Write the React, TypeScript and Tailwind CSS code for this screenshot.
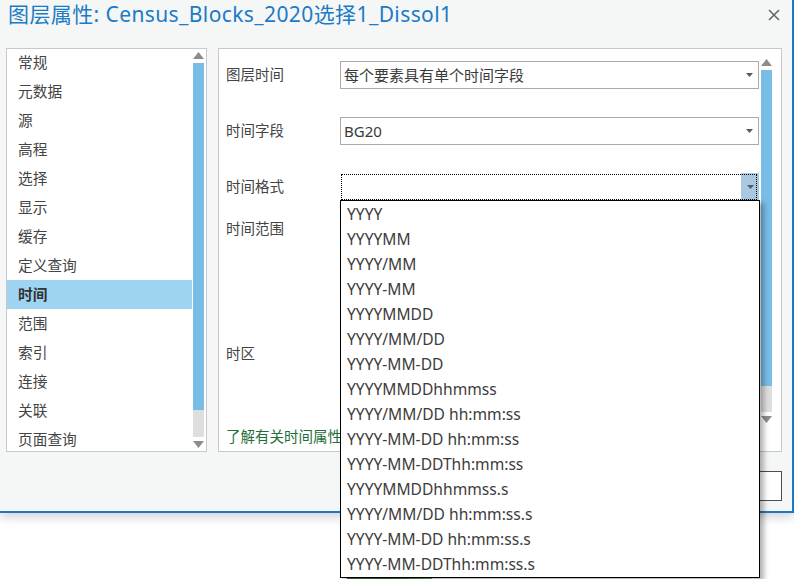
import React from 'react'

const navItems = ['常规', '元数据', '源', '高程', '选择', '显示', '缓存', '定义查询', '时间', '范围', '索引', '连接', '关联', '页面查询']

const formats = [
  'YYYY',
  'YYYYMM',
  'YYYY/MM',
  'YYYY-MM',
  'YYYYMMDD',
  'YYYY/MM/DD',
  'YYYY-MM-DD',
  'YYYYMMDDhhmmss',
  'YYYY/MM/DD hh:mm:ss',
  'YYYY-MM-DD hh:mm:ss',
  'YYYY-MM-DDThh:mm:ss',
  'YYYYMMDDhhmmss.s',
  'YYYY/MM/DD hh:mm:ss.s',
  'YYYY-MM-DD hh:mm:ss.s',
  'YYYY-MM-DDThh:mm:ss.s',
]

const font = { fontFamily: '"Noto Sans", "Noto Sans CJK SC", sans-serif' }

const Caret = () => (
  <svg width="7" height="4" viewBox="0 0 7 4" className="shrink-0">
    <path d="M0 0 L7 0 L3.5 4 Z" fill="#5a5a5a" />
  </svg>
)

const ArrowUp = () => (
  <svg width="11" height="7" viewBox="0 0 11 7">
    <path d="M5.5 0 L11 7 L0 7 Z" fill="#8c8c8c" />
  </svg>
)

const ArrowDown = () => (
  <svg width="11" height="7" viewBox="0 0 11 7">
    <path d="M0 0 L11 0 L5.5 7 Z" fill="#8c8c8c" />
  </svg>
)

const Combo: React.FC<{ value?: string; focused?: boolean }> = ({ value, focused }) => (
  <div className={`relative flex h-[28px] w-[419px] bg-white ${focused ? '' : 'border border-[#ababab]'}`}>
    <div className="flex flex-1 items-center pl-[3px] text-[15px] text-[#3a3a3a]">{value}</div>
    {focused ? (
      <div className="flex w-[18px] items-center justify-center bg-[#a9c8e2] pl-[1px]">
        <Caret />
      </div>
    ) : (
      <div className="flex w-[18px] items-center justify-center">
        <Caret />
      </div>
    )}
    {focused && <div className="pointer-events-none absolute inset-y-[1px] left-[1px] right-[2px] border border-dotted border-black" />}
  </div>
)

const FieldRow: React.FC<{ label: string; children?: React.ReactNode; className?: string }> = ({ label, children, className }) => (
  <div className={`flex items-center ${className ?? ''}`}>
    <div className="w-[114px] text-[14.5px] text-[#444]">{label}</div>
    {children}
  </div>
)

export default function App() {
  return (
    <div className="relative h-[579px] w-[794px] overflow-hidden bg-white" style={font}>
      {/* window behind */}
      <div className="absolute left-[347px] top-[577px] h-[2px] w-[85px] bg-gradient-to-r from-[#4b7a2a] via-[#3f6e23] to-[#7fae4a]" />

      {/* dialog */}
      <div className="relative flex h-[513px] flex-col border-b-2 border-r-2 border-[#1a79c6] bg-[#f5f6f6] pl-[6px] pr-[10px] shadow-[0_4px_10px_rgba(0,0,0,0.18)]">
        <div className="flex h-[48px] items-start justify-between">
          <div className="pl-[2px] text-[21px] leading-[28px] tracking-[0.4px] text-[#1b7bc6]">图层属性: Census_Blocks_2020选择1_Dissol1</div>
          <svg width="12" height="12" viewBox="0 0 12 12" className="mr-[2px] mt-[9px]">
            <path d="M1 1 L11 11 M11 1 L1 11" stroke="#666" strokeWidth="1.6" />
          </svg>
        </div>

        <div className="flex h-[404px] gap-[11px]">
          {/* nav list */}
          <div className="flex w-[201px] border border-[#c9c9c9] bg-white">
            <div className="-mt-[1px] flex flex-1 flex-col">
              {navItems.map((item) => (
                <div
                  key={item}
                  className={`flex h-[29px] shrink-0 items-center pl-[11px] text-[14.7px] ${
                    item === '时间' ? 'bg-[#9fd3f2] font-bold text-[#333]' : 'text-[#444]'
                  }`}
                >
                  {item}
                </div>
              ))}
            </div>
            <div className="ml-[1px] mr-[2px] flex w-[11px] flex-col items-center pt-[3px]">
              <ArrowUp />
              <div className="mt-[4px] h-[347px] w-full bg-[#79bde7]" />
              <div className="h-[27px] w-full bg-[#dedede]" />
              <div className="mt-[4px]">
                <ArrowDown />
              </div>
            </div>
          </div>

          {/* settings */}
          <div className="flex w-[564px] border border-[#c9c9c9] bg-white">
            <div className="flex flex-1 flex-col pl-[7px] pt-[12px]">
              <FieldRow label="图层时间">
                <Combo value="每个要素具有单个时间字段" />
              </FieldRow>
              <FieldRow label="时间字段" className="mt-[28px]">
                <Combo value="BG20" />
              </FieldRow>
              <FieldRow label="时间格式" className="mt-[28px]">
                <Combo focused />
              </FieldRow>
              <FieldRow label="时间范围" className="mt-[18px] h-[20px]" />
              <FieldRow label="时区" className="mt-[105px] h-[20px]" />
              <div className="mt-[62px] h-[20px] w-[114px] overflow-hidden whitespace-nowrap text-[14.5px] leading-[20px] text-[#1f6e3a]">了解有关时间属性的详细信息</div>
            </div>
            <div className="ml-[2px] mr-[9px] flex w-[11px] flex-col items-center pt-[10px]">
              <ArrowUp />
              <div className="mt-[4px] h-[316px] w-full bg-[#79bde7]" />
              <div className="h-[26px] w-full bg-[#dedede]" />
              <div className="mt-[4px]">
                <ArrowDown />
              </div>
            </div>
          </div>
        </div>

        <div className="mt-[19px] flex justify-end gap-[8px]">
          <div className="flex h-[30px] w-[76px] items-center justify-center border border-[#adadad] bg-white text-[14px] text-[#333]">确定</div>
          <div className="flex h-[30px] w-[76px] items-center justify-center border border-[#4f4f4f] bg-white text-[14px] text-[#333]">取消</div>
        </div>
      </div>

      {/* open drop-down list */}
      <div className="absolute left-[340px] top-[200px] h-[378px] w-[420px] border border-black bg-white pt-[1px] shadow-[4px_3px_5px_rgba(0,0,0,0.3)]">
        {formats.map((f) => (
          <div key={f} className="flex h-[25px] items-center pl-[6px] text-[15.6px] text-[#3c3c3c]">
            {f}
          </div>
        ))}
      </div>
    </div>
  )
}
